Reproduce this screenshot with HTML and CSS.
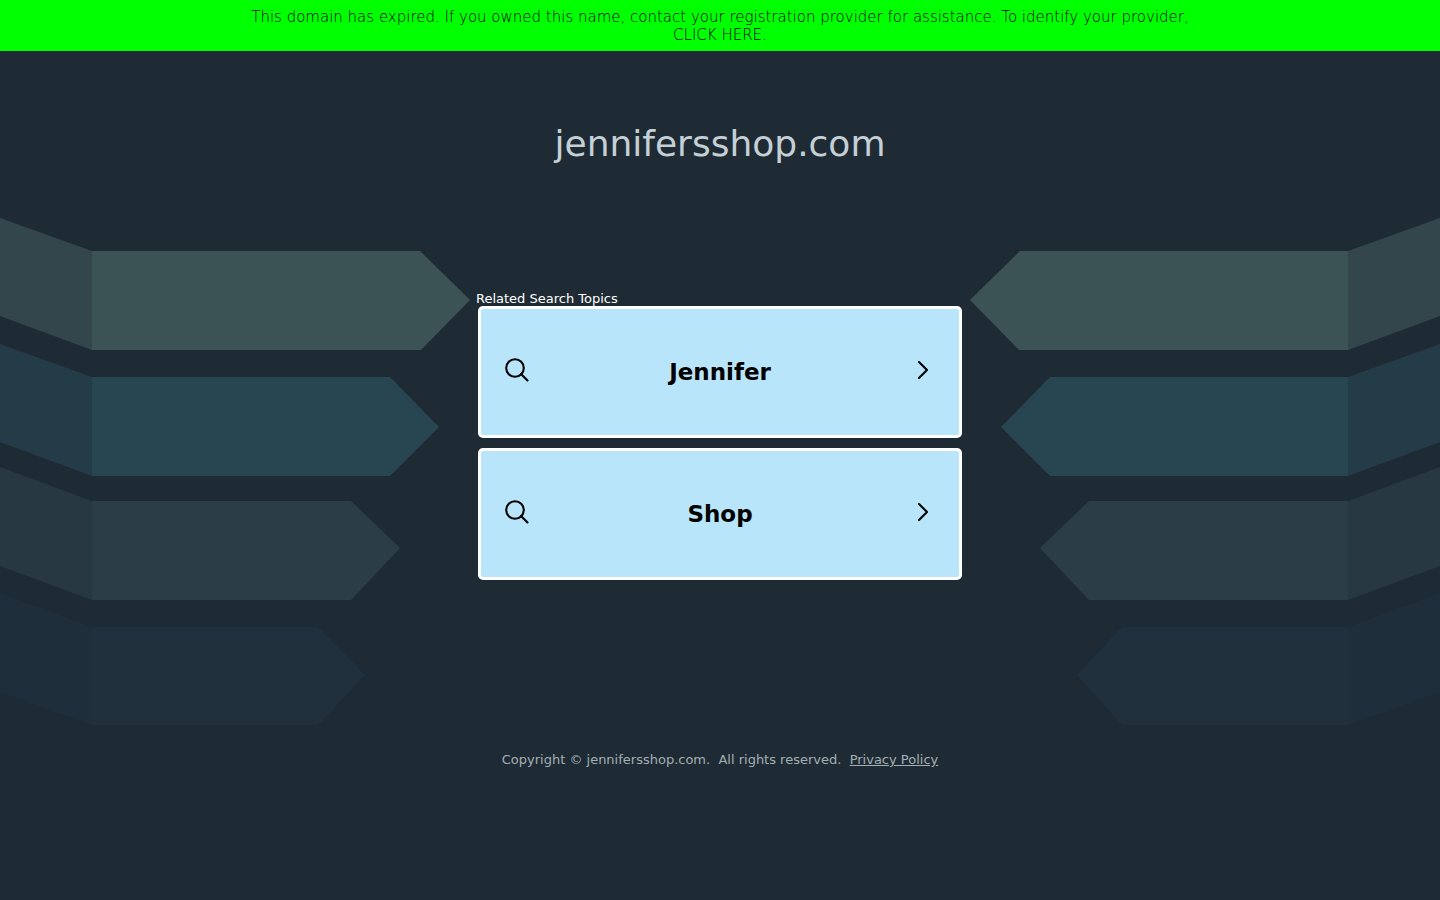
FILE: index.html
```html
<!DOCTYPE html>
<html lang="en">
<head>
    <meta charset="UTF-8">
    <meta name="viewport" content="width=device-width, initial-scale=1.0">
    <title>jennifersshop.com</title>
    <link rel="stylesheet" href="styles.css">
</head>
<body>
    <div class="banner">
        <a href="#" class="banner-link">This domain has expired. If you owned this name, contact your registration provider for assistance. To identify your provider, CLICK HERE.</a>
    </div>

    <header class="header">
        <h1>jennifersshop.com</h1>
    </header>

    <div class="content">
        <!-- Left arrows -->
        <svg class="arrows" viewBox="0 0 470 510" aria-hidden="true">
            <path fill="#32464c" d="M0 1L92 34V133L0 99Z"/>
            <path fill="#3c5356" d="M92 34H420L470 83L421 133H92Z"/>
            <path fill="#243c47" d="M0 127L92 160V259L0 225Z"/>
            <path fill="#284552" d="M92 160H390L439 210L390 259H92Z"/>
            <path fill="#283840" d="M0 250L92 284V383L0 349Z"/>
            <path fill="#2c3e45" d="M92 284H351L400 331L351 383H92Z"/>
            <path fill="#1e2e3a" d="M0 376L92 410V508L0 475Z"/>
            <path fill="#20313d" d="M92 410H318L365 458L318 508H92Z"/>
        </svg>

        <!-- Related searches -->
        <main class="topics">
            <h2>Related Search Topics</h2>
            <div class="topic-list">
                <a href="#" class="topic">
                    <svg class="icon" viewBox="0 0 26 26" aria-hidden="true">
                        <circle cx="12" cy="9" r="8.8"/>
                        <path d="M18 15L24.5 21.5"/>
                    </svg>
                    <span>Jennifer</span>
                    <svg class="icon" viewBox="0 0 26 26" aria-hidden="true">
                        <path d="M8 3L16 11L8 19"/>
                    </svg>
                </a>
                <a href="#" class="topic">
                    <svg class="icon" viewBox="0 0 26 26" aria-hidden="true">
                        <circle cx="12" cy="9" r="8.8"/>
                        <path d="M18 15L24.5 21.5"/>
                    </svg>
                    <span>Shop</span>
                    <svg class="icon" viewBox="0 0 26 26" aria-hidden="true">
                        <path d="M8 3L16 11L8 19"/>
                    </svg>
                </a>
            </div>
        </main>

        <!-- Right arrows -->
        <svg class="arrows flipped" viewBox="0 0 470 510" aria-hidden="true">
            <path fill="#32464c" d="M0 1L92 34V133L0 99Z"/>
            <path fill="#3c5356" d="M92 34H420L470 83L421 133H92Z"/>
            <path fill="#243c47" d="M0 127L92 160V259L0 225Z"/>
            <path fill="#284552" d="M92 160H390L439 210L390 259H92Z"/>
            <path fill="#283840" d="M0 250L92 284V383L0 349Z"/>
            <path fill="#2c3e45" d="M92 284H351L400 331L351 383H92Z"/>
            <path fill="#1e2e3a" d="M0 376L92 410V508L0 475Z"/>
            <path fill="#20313d" d="M92 410H318L363 458L318 508H92Z"/>
        </svg>
    </div>

    <footer class="footer">
        Copyright © jennifersshop.com.&nbsp; All rights reserved.&nbsp; <a href="#">Privacy Policy</a>
    </footer>
</body>
</html>
```

FILE: styles.css
```css
* {
    margin: 0;
    padding: 0;
    box-sizing: border-box;
}

body {
    min-height: 100vh;
    background: #1f2b34;
    font-family: "DejaVu Sans", Verdana, sans-serif;
    color: #fff;
}

.banner {
    padding: 8px 16% 7px;
    background: #00ff00;
    text-align: center;
    font-size: 15px;
    font-weight: 200;
}

.banner-link {
    color: #000;
    text-decoration: none;
}

.header {
    padding: 72px 16px 53px;
    text-align: center;
}

h1 {
    color: #c4d0d6;
    font-size: 36px;
    font-weight: 400;
}

.content {
    display: flex;
    justify-content: space-between;
    align-items: flex-start;
}

.arrows {
    width: 470px;
    flex-shrink: 1;
    min-width: 0;
}

.flipped {
    transform: scaleX(-1);
}

.topics {
    flex: 0 0 488px;
    padding-top: 74px;
}

h2 {
    font-size: 13px;
    font-weight: 400;
}

.topic-list {
    padding: 0 2px;
}

.topic {
    display: flex;
    justify-content: space-between;
    align-items: center;
    height: 132px;
    margin-bottom: 10px;
    padding: 0 22px;
    background: #b9e5fb;
    border: 3px solid #fff;
    border-radius: 5px;
    color: #000;
    font-size: 23px;
    font-weight: 700;
    text-decoration: none;
}

.icon {
    width: 26px;
    height: 26px;
    overflow: visible;
    fill: none;
    stroke: #000;
    stroke-width: 2.1;
    stroke-linecap: round;
    stroke-linejoin: round;
}

.footer {
    padding: 25px 16px;
    text-align: center;
    color: #a3afb5;
    font-size: 13px;
}

.footer a {
    color: inherit;
}
```
